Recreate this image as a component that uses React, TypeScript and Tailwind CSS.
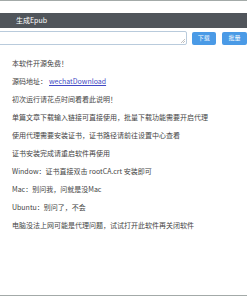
import React from 'react';

const lines: React.ReactNode[] = [
  '本软件开源免费！',
  <>
    源码地址：
    <a href="#" className="ml-[2px] text-[#4149c4] underline">wechatDownload</a>
  </>,
  '初次运行请花点时间看看此说明！',
  '单篇文章下载输入链接可直接使用，批量下载功能需要开启代理',
  '使用代理需要安装证书，证书路径请前往设置中心查看',
  '证书安装完成请重启软件再使用',
  'Window：证书直接双击 rootCA.crt 安装即可',
  'Mac：别问我，问就是没Mac',
  'Ubuntu：别问了，不会',
  '电脑没法上网可能是代理问题，试试打开此软件再关闭软件',
];

export default function App() {
  return (
    <div
      className="w-[247px] h-[296px] overflow-hidden bg-white border-t border-b border-[#a3aaa8] flex flex-col"
      style={{ fontFamily: '"Noto Sans CJK SC", "Liberation Sans", sans-serif' }}
    >
      <div className="h-[12px]" />
      <div className="h-[15px] bg-[#50555b] flex items-center pl-[16px] text-[7px] text-white">
        生成Epub
      </div>
      <div className="flex items-center mt-[3px] h-[14px]">
        <div className="relative ml-[-4px] w-[195px] h-[14px] border border-[#b9cbdc] rounded-[2px] bg-white">
          <svg className="absolute right-[1px] bottom-[1px]" width="4" height="4" viewBox="0 0 4 4">
            <path d="M0 4L4 0M2 4L4 2" stroke="#999" strokeWidth="0.6" />
          </svg>
        </div>
        <button className="ml-[5px] w-[25px] h-[13px] rounded-[2px] bg-[#4a9ae6] text-white text-[6px] leading-none">
          下载
        </button>
        <button className="ml-[6px] w-[25px] h-[13px] rounded-[2px] bg-[#4a9ae6] text-white text-[6px] leading-none shrink-0">
          批量
        </button>
      </div>
      <div className="mt-[9px] pl-[12px] text-[7px] leading-[18px] text-[#444]">
        {lines.map((l, i) => (
          <div key={i} className="whitespace-nowrap">{l}</div>
        ))}
      </div>
    </div>
  );
}
